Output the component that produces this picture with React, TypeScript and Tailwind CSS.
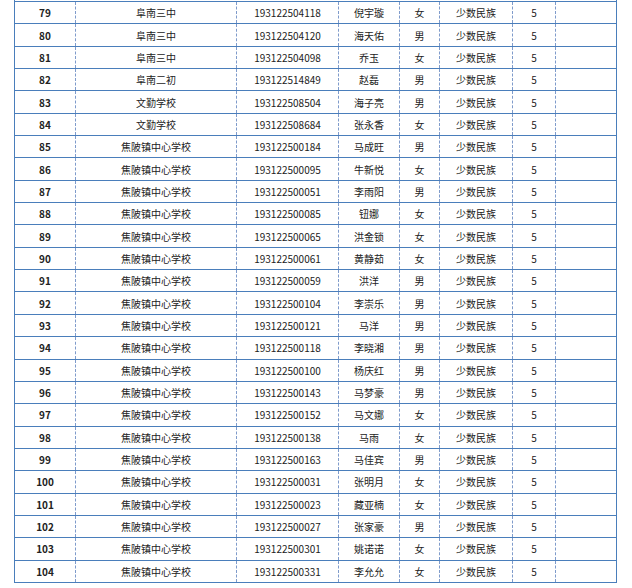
import React from "react";

const rows: [number, string, string, string, string][] = [
  [79, "阜南三中", "193122504118", "倪宇璇", "女"],
  [80, "阜南三中", "193122504120", "海天佑", "男"],
  [81, "阜南三中", "193122504098", "乔玉", "女"],
  [82, "阜南二初", "193122514849", "赵磊", "男"],
  [83, "文勤学校", "193122508504", "海子亮", "男"],
  [84, "文勤学校", "193122508684", "张永香", "女"],
  [85, "焦陂镇中心学校", "193122500184", "马成旺", "男"],
  [86, "焦陂镇中心学校", "193122500095", "牛新悦", "女"],
  [87, "焦陂镇中心学校", "193122500051", "李雨阳", "男"],
  [88, "焦陂镇中心学校", "193122500085", "钮娜", "女"],
  [89, "焦陂镇中心学校", "193122500065", "洪金锁", "女"],
  [90, "焦陂镇中心学校", "193122500061", "黄静茹", "女"],
  [91, "焦陂镇中心学校", "193122500059", "洪洋", "男"],
  [92, "焦陂镇中心学校", "193122500104", "李崇乐", "男"],
  [93, "焦陂镇中心学校", "193122500121", "马洋", "男"],
  [94, "焦陂镇中心学校", "193122500118", "李晓湘", "男"],
  [95, "焦陂镇中心学校", "193122500100", "杨庆红", "男"],
  [96, "焦陂镇中心学校", "193122500143", "马梦豪", "男"],
  [97, "焦陂镇中心学校", "193122500152", "马文娜", "女"],
  [98, "焦陂镇中心学校", "193122500138", "马雨", "女"],
  [99, "焦陂镇中心学校", "193122500163", "马佳宾", "男"],
  [100, "焦陂镇中心学校", "193122500031", "张明月", "女"],
  [101, "焦陂镇中心学校", "193122500023", "藏亚楠", "女"],
  [102, "焦陂镇中心学校", "193122500027", "张家豪", "男"],
  [103, "焦陂镇中心学校", "193122500301", "姚诺诺", "女"],
  [104, "焦陂镇中心学校", "193122500331", "李允允", "女"],
];

const cell = "flex items-center justify-center border-l border-dashed border-[#7f9bcb]";

const App = () => {
  return (
    <div className="w-[632px] h-[588px] bg-white text-[10px] text-[#222] font-['Noto_Sans_CJK_SC',sans-serif]">
      <div className="ml-[14px] w-[603px] pt-[1px] border-x border-[#4a7ebb] border-b">
        {rows.map((r) => (
          <div
            key={r[0]}
            className="grid grid-cols-[60px_161px_102px_61px_40px_73px_43px_61px] h-[22.35px] border-t border-[#4a7ebb]"
          >
            <div className="flex items-center justify-center font-bold">{r[0]}</div>
            <div className={cell}>{r[1]}</div>
            <div className={cell}>{r[2]}</div>
            <div className={cell}>{r[3]}</div>
            <div className={cell}>{r[4]}</div>
            <div className={cell}>少数民族</div>
            <div className={cell}>5</div>
            <div className={cell}></div>
          </div>
        ))}
      </div>
    </div>
  );
};

export default App;
